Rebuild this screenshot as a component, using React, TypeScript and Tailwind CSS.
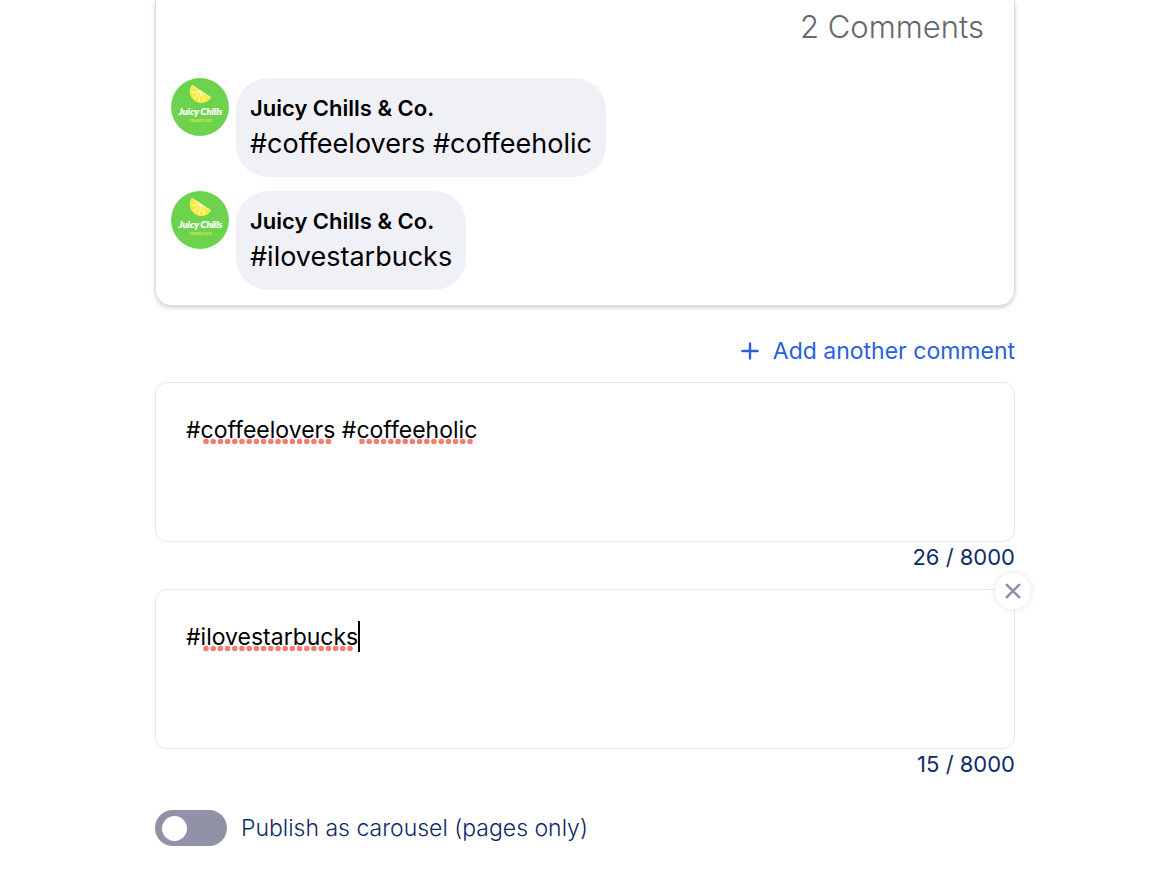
import { useState } from "react";

function Avatar() {
  return (
    <svg viewBox="0 0 58 58" className="size-[58px] shrink-0" role="img" aria-label="Juicy Chills logo">
      <circle cx="29" cy="29" r="29" fill="#6dd34f" />
      <g transform="translate(0.8 0.3)">
        <path d="M20.2 7 A11 11 0 0 0 39 19.2 Z" fill="#fde93c" stroke="#fff36b" strokeWidth="0.8" strokeLinejoin="round" />
        <path
          d="M29.4 13 L20.2 14.2 M29.4 13 L22.4 20 M29.4 13 L27.4 22.6 M29.4 13 L32.8 22.4"
          stroke="#fffde6"
          strokeWidth="0.9"
          strokeLinecap="round"
        />
        <path d="M20.8 7.6 L38.4 19" stroke="#fffbc4" strokeWidth="0.8" />
      </g>
      <text
        x="29.5"
        y="36.6"
        textAnchor="middle"
        fontFamily="Lato, sans-serif"
        fontSize="9.4"
        fontWeight="900"
        fontStyle="italic"
        fill="#fff"
        stroke="#fff"
        strokeWidth="0.2"
      >
        Juicy Chills
      </text>
      <text x="29.5" y="44.2" textAnchor="middle" fontFamily="Lato, sans-serif" fontSize="3" fontWeight="700" fill="#e3ea3c">
        ORGANIC JUICE
      </text>
    </svg>
  );
}

function Comment({ text }: { text: string }) {
  return (
    <li className="flex items-start gap-[7px]">
      <Avatar />
      <div className="rounded-[32px] bg-[#f0f1f6] px-[14px] pt-[13px] pb-[14px] text-black">
        <p className="text-[22px] leading-[34px] font-semibold">Juicy Chills &amp; Co.</p>
        <p className="text-[27px] leading-[38px]">{text}</p>
      </div>
    </li>
  );
}

type Mark = { start: number; length: number };

function CommentBox({
  label,
  value,
  onChange,
  marks,
  caret,
  onRemove,
}: {
  label: string;
  value: string;
  onChange: (value: string) => void;
  marks: Mark[];
  caret?: number;
  onRemove?: () => void;
}) {
  return (
    <div className="relative">
      <div className="grid">
        <textarea
          aria-label={label}
          spellCheck={false}
          value={value}
          onChange={(event) => onChange(event.target.value)}
          className="col-start-1 row-start-1 block h-40 w-full resize-none rounded-xl border border-[#e7e7ee] bg-white px-[30px] pt-[30px] text-[23px] leading-[34px] text-black outline-none"
        />
        <svg className="pointer-events-none col-start-1 row-start-1 h-20 w-full" aria-hidden="true">
          {marks.map((mark) => (
            <line
              key={mark.start}
              x1={mark.start}
              x2={mark.start + mark.length}
              y1="59.5"
              y2="59.5"
              stroke="#f47c70"
              strokeWidth="5.6"
              strokeLinecap="round"
              strokeDasharray="0 7.2"
            />
          ))}
          {caret !== undefined && <rect x={caret} y="32" width="2" height="31" fill="#000" />}
        </svg>
      </div>
      <p className="text-right text-[22px] leading-[31px] text-[#0d2b66]">{value.length} / 8000</p>
      {onRemove && (
        <button
          type="button"
          aria-label="Remove comment"
          onClick={onRemove}
          className="absolute -top-4 -right-4 flex size-9 items-center justify-center rounded-full bg-white text-[#8f90a6] shadow-[0_0_6px_rgba(40,41,61,0.14)]"
        >
          <svg viewBox="0 0 16 16" className="size-4" fill="none" stroke="currentColor" strokeWidth="2.6" strokeLinecap="round">
            <path d="M1.8 1.8 L14.2 14.2 M14.2 1.8 L1.8 14.2" />
          </svg>
        </button>
      )}
    </div>
  );
}

export default function App() {
  const [first, setFirst] = useState("#coffeelovers #coffeeholic");
  const [second, setSecond] = useState("#ilovestarbucks");
  const [carousel, setCarousel] = useState(false);

  return (
    <main className="bg-white pr-[153px] pb-6 pl-[155px] font-[Inter,sans-serif]">
      <section className="rounded-b-2xl border border-t-0 border-[#dcdcdc] px-[15px] pb-[15px] shadow-[0_2px_4px_rgba(0,0,0,0.18)]">
        <h2 className="pt-[5px] pr-[15px] pb-[29px] text-right text-[31px] leading-[44px] font-light text-[#65676b]">2 Comments</h2>
        <ul className="flex flex-col gap-[14px]">
          <Comment text={first} />
          <Comment text={second} />
        </ul>
      </section>

      <div className="flex justify-end pt-[29px] pb-[15px]">
        <button type="button" className="flex items-center gap-[14px] text-[23px] leading-8 text-[#2860e0]">
          <svg viewBox="0 0 18 18" className="size-[18px]" fill="none" stroke="currentColor" strokeWidth="2.4" strokeLinecap="round">
            <path d="M9 1.4 V16.6 M1.4 9 H16.6" />
          </svg>
          Add another comment
        </button>
      </div>

      <div className="flex flex-col gap-4">
        <CommentBox
          label="First comment"
          value={first}
          onChange={setFirst}
          marks={[
            { start: 51, length: 123 },
            { start: 207, length: 109 },
          ]}
        />
        <CommentBox
          label="Second comment"
          value={second}
          onChange={setSecond}
          marks={[{ start: 51, length: 145 }]}
          caret={203}
          onRemove={() => setSecond("")}
        />
      </div>

      <label className="mt-[30px] flex w-fit cursor-pointer items-center gap-[14px] text-[23px] leading-9 font-light text-[#0d2b66]">
        <input
          type="checkbox"
          role="switch"
          checked={carousel}
          onChange={(event) => setCarousel(event.target.checked)}
          className="flex h-9 w-[72px] appearance-none items-center rounded-full bg-[#9192a7] px-[7px] before:size-[25px] before:rounded-full before:bg-white before:content-[''] checked:justify-end checked:bg-[#2860e0]"
        />
        Publish as carousel (pages only)
      </label>
    </main>
  );
}
